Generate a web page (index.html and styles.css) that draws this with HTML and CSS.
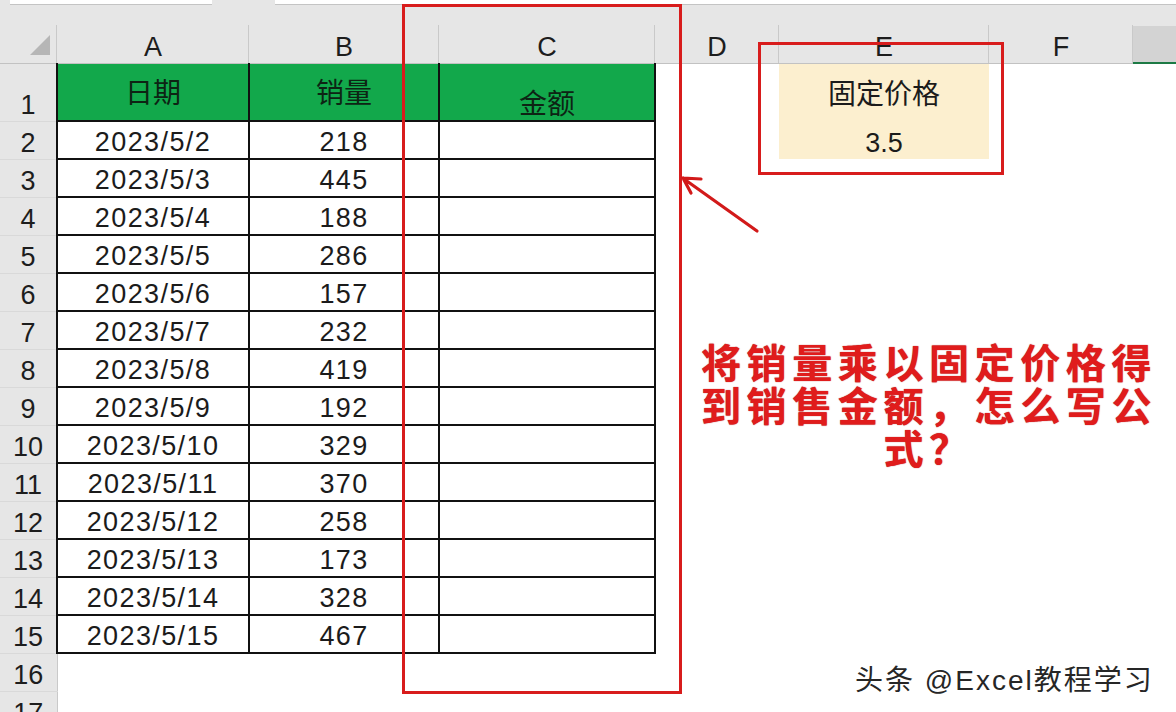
FILE: index.html
```html
<!DOCTYPE html>
<html lang="zh-CN">
<head>
  <meta charset="UTF-8">
  <title>销售金额</title>
  <link rel="stylesheet" href="styles.css">
</head>
<body>
  <div class="sheet">
    <div class="toolbar">
      <div class="namebox"></div>
      <div class="formula"></div>
    </div>

    <table class="grid">
      <colgroup>
        <col class="c-row">
        <col class="c-a">
        <col class="c-b">
        <col class="c-c">
        <col class="c-d">
        <col class="c-e">
        <col class="c-f">
        <col class="c-g">
      </colgroup>
      <thead>
        <tr class="colhead">
          <th class="corner"><span class="tri"></span></th>
          <th>A</th>
          <th>B</th>
          <th>C</th>
          <th>D</th>
          <th>E</th>
          <th>F</th>
          <th class="sel"></th>
        </tr>
      </thead>
      <tbody id="rows">
        <tr class="r1">
          <th>1</th>
          <td class="hd">日期</td>
          <td class="hd">销量</td>
          <td class="hd amt">金额</td>
          <td></td>
          <td class="price">固定价格</td>
          <td></td>
          <td></td>
        </tr>
      </tbody>
    </table>

    <!-- annotations drawn over the sheet -->
    <div class="mark mark-col"></div>
    <div class="mark mark-price"></div>
    <svg class="arrow" width="90" height="70" viewBox="0 0 90 70">
      <path d="M86 64 L13 12 M12 11 L30 12 M12 11 L20 26" fill="none" stroke="#d21a1a" stroke-width="3.2" stroke-linecap="round"/>
    </svg>
    <div class="question">将销量乘以固定价格得<br>到销售金额，怎么写公<br>式？</div>
    <div class="watermark">头条 @Excel教程学习</div>
  </div>

  <script>
    const sales = [218, 445, 188, 286, 157, 232, 419, 192, 329, 370, 258, 173, 328, 467];
    const body = document.getElementById('rows');

    sales.forEach((qty, i) => {
      const row = document.createElement('tr');
      row.innerHTML =
        '<th>' + (i + 2) + '</th>' +
        '<td class="d">2023/5/' + (i + 2) + '</td>' +
        '<td class="d">' + qty + '</td>' +
        '<td class="d"></td>' +
        '<td></td>' +
        (i === 0 ? '<td class="price val">3.5</td>' : '<td></td>') +
        '<td></td><td></td>';
      body.appendChild(row);
    });

    // empty rows below the data
    [16, 17].forEach((n) => {
      const row = document.createElement('tr');
      row.innerHTML = '<th>' + n + '</th><td></td><td></td><td></td><td></td><td></td><td></td><td></td>';
      body.appendChild(row);
    });
  </script>
</body>
</html>
```

FILE: styles.css
```css
:root {
  --head-bg: #e6e6e6;
  --head-line: #c9c9c9;
  --green: #12a84b;
  --yellow: #fcefcf;
  --mark-red: #d81c1c;
}

body {
  margin: 0;
  overflow: hidden;
  background: #ffffff;
  font-family: "Liberation Sans", "Noto Sans CJK SC", sans-serif;
  color: #1b1b1b;
}

.sheet {
  position: relative;
  width: 1176px;
  height: 712px;
  overflow: hidden;
  background: var(--head-bg);
}

/* remains of name box + formula bar */
.toolbar {
  display: flex;
  gap: 63px;
  padding-left: 10px;
  height: 5px;
}

.namebox,
.formula {
  height: 4px;
  background: #ffffff;
  border-bottom: 1px solid #c4c4c4;
}

.namebox { width: 202px; }
.formula { flex: 1; }

.grid {
  width: 1176px;
  table-layout: fixed;
  border-collapse: collapse;
  background: #ffffff;
}

.c-row { width: 57px; }
.c-a { width: 192px; }
.c-b { width: 190px; }
.c-c { width: 216px; }
.c-d { width: 124px; }
.c-e { width: 210px; }
.c-f { width: 144px; }
.c-g { width: 43px; }

.grid tr { height: 38px; }
.grid .colhead { height: 58px; }
.grid .r1 { height: 58px; }

.grid th,
.grid td {
  padding: 0;
  font-size: 27px;
  font-weight: normal;
  text-align: center;
  white-space: nowrap;
  vertical-align: bottom;
  line-height: 31px;
}

.colhead th {
  line-height: 32px;
  background: var(--head-bg) linear-gradient(var(--head-line), var(--head-line)) right bottom / 1px 38px no-repeat;
  border-bottom: 1px solid #c2c2c2;
  color: #1d1d1d;
}

.colhead .corner {
  text-align: right;
  line-height: 0;
  padding: 0 7px 8px 0;
}

.tri {
  display: inline-block;
  width: 0;
  height: 0;
  border-left: 20px solid transparent;
  border-bottom: 20px solid #b6b6b6;
}

.colhead .sel {
  background: var(--head-bg) linear-gradient(#d3d3d3, #d3d3d3) left bottom / 100% 36px no-repeat;
  border-bottom: 2px solid #1d7a45;
}

tbody th {
  background: var(--head-bg);
  border-right: 1px solid var(--head-line);
  border-bottom: 1px solid #d9d9d9;
  color: #1d1d1d;
}

tbody td.d {
  border: 2px solid #111111;
  letter-spacing: 1.4px;
}

.r1 .hd {
  background: var(--green);
  color: #0d2414;
  font-size: 28px;
  line-height: 40px;
  padding-bottom: 6px;
  border-right: 2px solid #111111;
  border-left: 2px solid #111111;
  border-bottom: 2px solid #111111;
}

.r1 .amt {
  line-height: 31px;
  padding-bottom: 0;
}

td.price {
  background: var(--yellow);
  font-size: 28px;
  line-height: 40px;
  padding-bottom: 6px;
}

td.price.val {
  font-size: 27px;
  line-height: 31px;
  padding-bottom: 0;
}

/* red annotation frames */
.mark {
  position: absolute;
  border: 3px solid var(--mark-red);
  box-sizing: border-box;
}

.mark-col {
  left: 402px;
  top: 4px;
  width: 280px;
  height: 690px;
}

.mark-price {
  left: 758px;
  top: 42px;
  width: 246px;
  height: 133px;
}

.arrow {
  position: absolute;
  left: 671px;
  top: 167px;
}

.question {
  position: absolute;
  left: 694px;
  top: 340px;
  width: 470px;
  text-align: center;
  font-family: "Noto Sans CJK SC", sans-serif;
  font-weight: 700;
  font-size: 40px;
  line-height: 43px;
  letter-spacing: 5.6px;
  color: #e01c1c;
  text-shadow: 0 0 1px #a81212;
}

.watermark {
  position: absolute;
  left: 855px;
  top: 658px;
  font-family: "Liberation Sans", "Noto Sans CJK SC", sans-serif;
  font-size: 28px;
  letter-spacing: 2px;
  color: #262626;
  text-shadow: 1px 1px 0 #ffffff;
}
```
